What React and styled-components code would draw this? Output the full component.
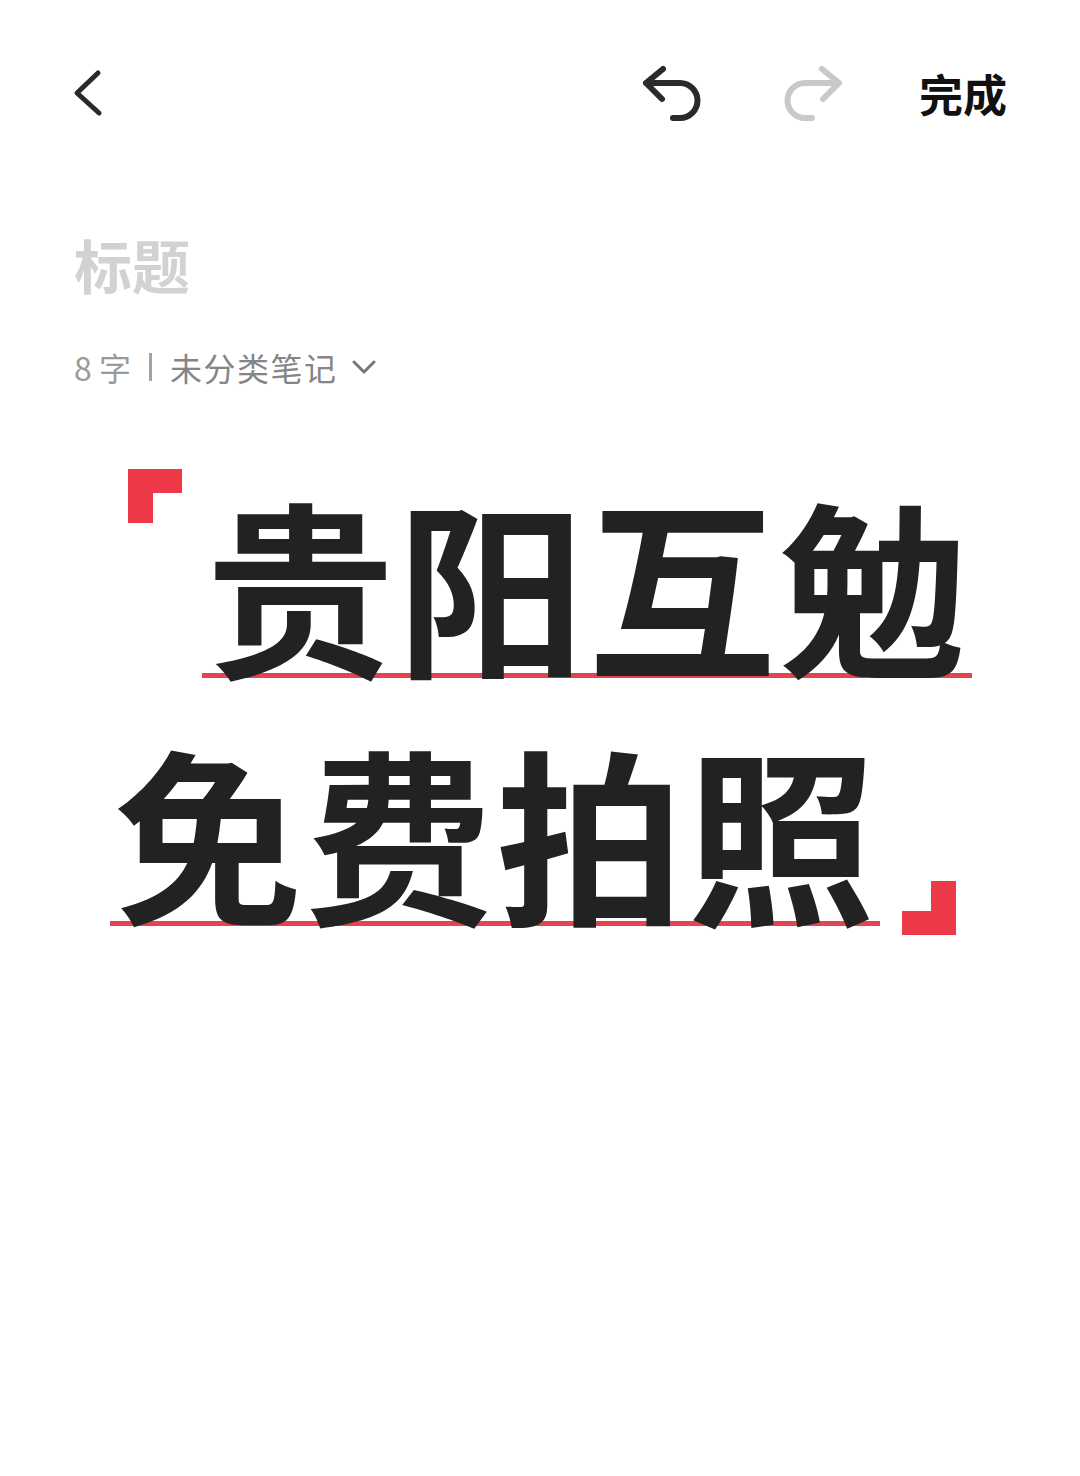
import styled, { createGlobalStyle } from 'styled-components'

const GlobalStyle = createGlobalStyle`
    html, body {
        margin: 0;
        padding: 0;
        background: #fff;
    }
    body {
        font-family: "Noto Sans CJK SC", "Noto Sans", sans-serif;
    }
`

const Page = styled.div`
    width: 1080px;
    min-height: 1476px;
    background: #fff;
`

const Header = styled.div`
    display: flex;
    align-items: center;
    height: 186px;
    padding: 0 73px 0 64px;
    box-sizing: border-box;
`

const IconButton = styled.button`
    display: flex;
    align-items: center;
    justify-content: center;
    padding: 0;
    border: none;
    background: none;
    color: ${p => (p.$disabled ? '#c9c9c9' : '#2a2a2a')};
`

const Actions = styled.div`
    margin-left: auto;
    display: flex;
    align-items: center;
    gap: 79px;
`

const Done = styled.span`
    font-size: 44px;
    font-weight: 700;
    color: #111;
    line-height: 1;
    margin-left: -6px;
`

const Body = styled.div`
    padding: 49px 0 0 74px;
`

const Title = styled.div`
    font-size: 58px;
    line-height: 58px;
    font-weight: 700;
    color: #d2d2d2;
`

const Meta = styled.div`
    display: flex;
    align-items: center;
    margin-top: 58px;
    height: 32px;
    font-size: 32px;
    line-height: 32px;
    color: #9a9a9a;
`

const Count = styled.span`
    letter-spacing: 0;
`

const Divider = styled.span`
    width: 3px;
    height: 28px;
    background: #a3a3a3;
    margin: 0 18px;
`

const Category = styled.span`
    color: #858585;
    letter-spacing: 1.5px;
`

const Caret = styled.span`
    display: flex;
    margin-left: 15px;
`

const Poster = styled.div`
    margin: 74px 0 0 36px;
    display: flex;
    flex-direction: column;
`

const Line = styled.div`
    display: flex;
    align-items: ${p => (p.$end ? 'flex-end' : 'flex-start')};
    padding-left: ${p => p.$indent || 0}px;
    gap: ${p => p.$gap || 20}px;
`

const Phrase = styled.span`
    display: inline-block;
    font-size: 188px;
    line-height: 248px;
    font-weight: 700;
    color: #222;
    letter-spacing: 3px;
    padding: 0 2px 0 4px;
    background-image: linear-gradient(#e5434f, #e5434f);
    background-repeat: no-repeat;
    background-size: 100% 5px;
    background-position: 0 216px;
    white-space: nowrap;
`

const Corner = styled.div`
    flex: none;
    width: 29px;
    height: 30px;
    border-color: #ee3a48;
    border-style: solid;
    border-width: ${p => (p.$close ? '0 25px 24px 0' : '24px 0 0 25px')};
    margin: ${p => (p.$close ? '0 0 18px 0' : '12px 0 0 0')};
`

const BackIcon = () => (
    <svg width="48" height="48" viewBox="0 0 48 48" fill="none">
        <path d="M34 4 L13 24 L35 44" stroke="currentColor" strokeWidth="5" strokeLinecap="round" strokeLinejoin="round" />
    </svg>
)

const UndoIcon = ({ flip }) => (
    <svg width="64" height="64" viewBox="0 0 64 64" fill="none" style={flip ? { transform: 'scaleX(-1)' } : undefined}>
        <path
            d="M24 8 L7 22 L23 38 M7 22 H41 A17.5 17.5 0 0 1 41 57 H34"
            stroke="currentColor"
            strokeWidth="6"
            strokeLinecap="round"
            strokeLinejoin="round"
        />
    </svg>
)

const ChevronDown = () => (
    <svg width="24" height="16" viewBox="0 0 24 16" fill="none">
        <path d="M2 3 L12 13 L22 3" stroke="#777" strokeWidth="3" strokeLinecap="round" strokeLinejoin="round" />
    </svg>
)

const App = () => (
    <Page>
        <GlobalStyle />
        <Header>
            <IconButton>
                <BackIcon />
            </IconButton>
            <Actions>
                <IconButton>
                    <UndoIcon />
                </IconButton>
                <IconButton $disabled>
                    <UndoIcon flip />
                </IconButton>
                <Done>完成</Done>
            </Actions>
        </Header>

        <Body>
            <Title>标题</Title>
            <Meta>
                <Count>8 字</Count>
                <Divider />
                <Category>未分类笔记</Category>
                <Caret>
                    <ChevronDown />
                </Caret>
            </Meta>

            <Poster>
                <Line $indent={18}>
                    <Corner />
                    <Phrase>贵阳互勉</Phrase>
                </Line>
                <Line $end $gap={22}>
                    <Phrase>免费拍照</Phrase>
                    <Corner $close />
                </Line>
            </Poster>
        </Body>
    </Page>
)

export default App
